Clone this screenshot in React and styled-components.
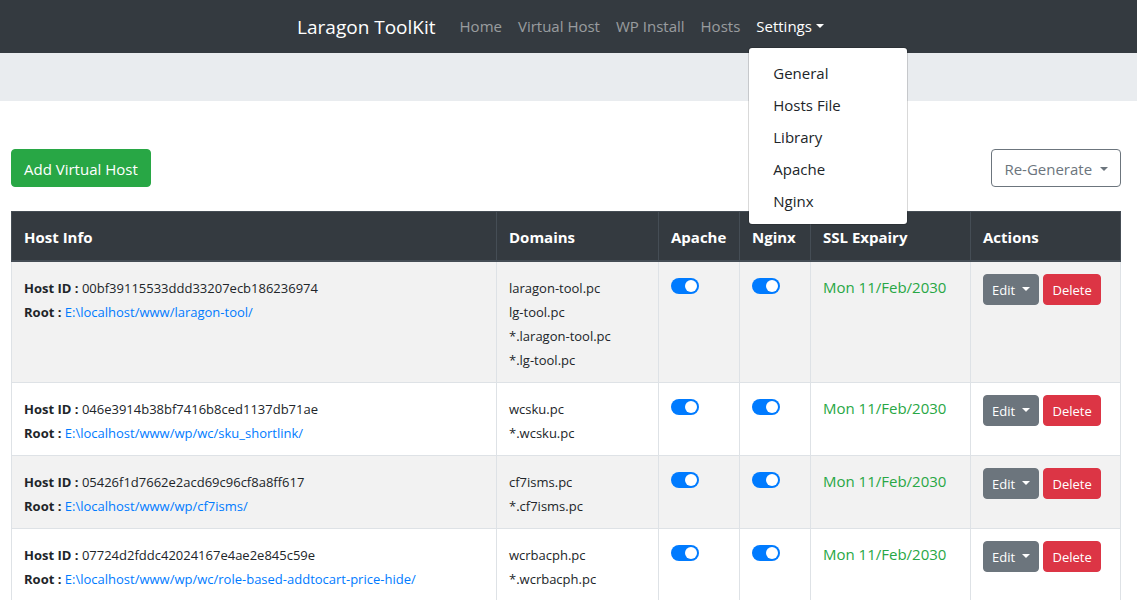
import React from "react";
import styled, { createGlobalStyle, css } from "styled-components";

const GlobalStyle = createGlobalStyle`
  *, *::before, *::after { box-sizing: border-box; }
  body {
    margin: 0;
    background: #fff;
    color: #212529;
    font-family: "Open Sans", "Noto Sans", sans-serif;
    font-size: 15px;
    line-height: 24px;
  }
  a { color: #007bff; text-decoration: none; }
`;

const Navbar = styled.nav`
  display: flex;
  justify-content: center;
  align-items: center;
  padding: 6px 8px 7px 0;
  background: #343a40;
`;

const Brand = styled.a`
  margin-right: 16px;
  padding-top: 2px;
  color: #fff;
  font-size: 19px;
`;

const NavList = styled.ul`
  display: flex;
  margin: 0;
  padding: 0;
  list-style: none;
`;

const NavItem = styled.li`
  position: relative;
`;

const NavLink = styled.a`
  display: block;
  padding: 8px;
  color: ${(p) => (p.$active ? "#fff" : "rgba(255, 255, 255, 0.5)")};
`;

const Caret = styled.span`
  display: inline-block;
  margin-left: 4px;
  vertical-align: 4px;
  border: 4px solid transparent;
  border-top-color: currentColor;
  border-bottom: 0;
`;

const Menu = styled.ul`
  position: absolute;
  top: 100%;
  left: 0;
  z-index: 10;
  width: 160px;
  margin: 1px 0 0;
  padding: 8px 0;
  list-style: none;
  background: #fff;
  background-clip: padding-box;
  border: 1px solid rgba(0, 0, 0, 0.15);
  border-radius: 4px;
`;

const MenuLink = styled.a`
  display: block;
  padding: 5px 24px 3px;
  color: #212529;
`;

const Strip = styled.header`
  height: 48px;
  background: #e9ecef;
`;

const Main = styled.main`
  padding: 48px 16px 0 11px;
`;

const Toolbar = styled.div`
  display: flex;
  justify-content: space-between;
  margin-bottom: 24px;
`;

const tones = {
  success: css`background: #28a745; border-color: #28a745; color: #fff;`,
  outline: css`background: transparent; border-color: #6c757d; color: #6c757d;`,
  secondary: css`background: #6c757d; border-color: #6c757d; color: #fff;`,
  danger: css`background: #dc3545; border-color: #dc3545; color: #fff;`,
};

const Button = styled.button`
  padding: ${(p) => (p.$small ? "5px 8px 3px" : "7px 12px 5px")};
  border: 1px solid;
  border-radius: 4px;
  font-family: inherit;
  font-size: ${(p) => (p.$small ? "13px" : "15px")};
  line-height: ${(p) => (p.$small ? "21px" : "24px")};
  white-space: nowrap;
  ${(p) => tones[p.$tone]}
`;

const HostTable = styled.table`
  width: 100%;
  table-layout: fixed;
  border-collapse: collapse;
`;

const Col = styled.col`
  width: ${(p) => p.$width};
`;

const HeadCell = styled.th`
  padding: 13px 12px 11px;
  text-align: left;
  color: #fff;
  background: #343a40;
  border: 1px solid #454d55;
  border-bottom-width: 2px;
`;

const BodyRow = styled.tr`
  &:nth-of-type(odd) { background: #f2f2f2; }
`;

const Cell = styled.td`
  padding: ${(p) => (p.$text ? "13px 12px 11px" : "12px")};
  vertical-align: top;
  border: 1px solid #dee2e6;
`;

const Line = styled.div`
  white-space: nowrap;
`;

const Small = styled.small`
  font-size: 13px;
  line-height: 16px;
`;

const Switch = styled.input`
  appearance: none;
  display: block;
  width: 28px;
  height: 16px;
  margin: 4px 0 0;
  padding: 2px;
  border-radius: 8px;
  background: #adb5bd;

  &::before {
    content: "";
    display: block;
    width: 12px;
    height: 12px;
    border-radius: 50%;
    background: #fff;
  }
  &:checked { background: #007bff; }
  &:checked::before { margin-left: 12px; }
`;

const Expiry = styled.span`
  color: #28a745;
`;

const Actions = styled.div`
  display: flex;
  gap: 4px;
`;

const links = ["Home", "Virtual Host", "WP Install", "Hosts"];
const settings = ["General", "Hosts File", "Library", "Apache", "Nginx"];
const columns = [
  ["Host Info", "auto"],
  ["Domains", "162px"],
  ["Apache", "81px"],
  ["Nginx", "71px"],
  ["SSL Expairy", "160px"],
  ["Actions", "150px"],
];
const hosts = [
  {
    id: "00bf39115533ddd33207ecb186236974",
    root: "E:\\localhost/www/laragon-tool/",
    domains: ["laragon-tool.pc", "lg-tool.pc", "*.laragon-tool.pc", "*.lg-tool.pc"],
  },
  {
    id: "046e3914b38bf7416b8ced1137db71ae",
    root: "E:\\localhost/www/wp/wc/sku_shortlink/",
    domains: ["wcsku.pc", "*.wcsku.pc"],
  },
  {
    id: "05426f1d7662e2acd69c96cf8a8ff617",
    root: "E:\\localhost/www/wp/cf7isms/",
    domains: ["cf7isms.pc", "*.cf7isms.pc"],
  },
  {
    id: "07724d2fddc42024167e4ae2e845c59e",
    root: "E:\\localhost/www/wp/wc/role-based-addtocart-price-hide/",
    domains: ["wcrbacph.pc", "*.wcrbacph.pc"],
  },
];

function HostRow({ host }) {
  return (
    <BodyRow>
      <Cell $text>
        <Line><Small><b>Host ID :</b> {host.id}</Small></Line>
        <Line><Small><b>Root :</b> <a href="#root">{host.root}</a></Small></Line>
      </Cell>
      <Cell $text>
        {host.domains.map((d) => <Line key={d}><Small>{d}</Small></Line>)}
      </Cell>
      <Cell><Switch type="checkbox" defaultChecked aria-label={`Apache for ${host.domains[0]}`} /></Cell>
      <Cell><Switch type="checkbox" defaultChecked aria-label={`Nginx for ${host.domains[0]}`} /></Cell>
      <Cell $text><Expiry>Mon 11/Feb/2030</Expiry></Cell>
      <Cell>
        <Actions>
          <Button type="button" $small $tone="secondary">Edit <Caret /></Button>
          <Button type="button" $small $tone="danger">Delete</Button>
        </Actions>
      </Cell>
    </BodyRow>
  );
}

export default function App() {
  return (
    <>
      <GlobalStyle />
      <Navbar>
        <Brand href="#">Laragon ToolKit</Brand>
        <NavList>
          {links.map((l) => <NavItem key={l}><NavLink href="#">{l}</NavLink></NavItem>)}
          <NavItem>
            <NavLink href="#" $active aria-expanded="true">Settings<Caret /></NavLink>
            <Menu>
              {settings.map((s) => <li key={s}><MenuLink href="#">{s}</MenuLink></li>)}
            </Menu>
          </NavItem>
        </NavList>
      </Navbar>
      <Strip />
      <Main>
        <Toolbar>
          <Button type="button" $tone="success">Add Virtual Host</Button>
          <Button type="button" $tone="outline">Re-Generate <Caret /></Button>
        </Toolbar>
        <HostTable>
          <colgroup>
            {columns.map(([name, width]) => <Col key={name} $width={width} />)}
          </colgroup>
          <thead>
            <tr>{columns.map(([name]) => <HeadCell key={name} scope="col">{name}</HeadCell>)}</tr>
          </thead>
          <tbody>
            {hosts.map((h) => <HostRow key={h.id} host={h} />)}
          </tbody>
        </HostTable>
      </Main>
    </>
  );
}
